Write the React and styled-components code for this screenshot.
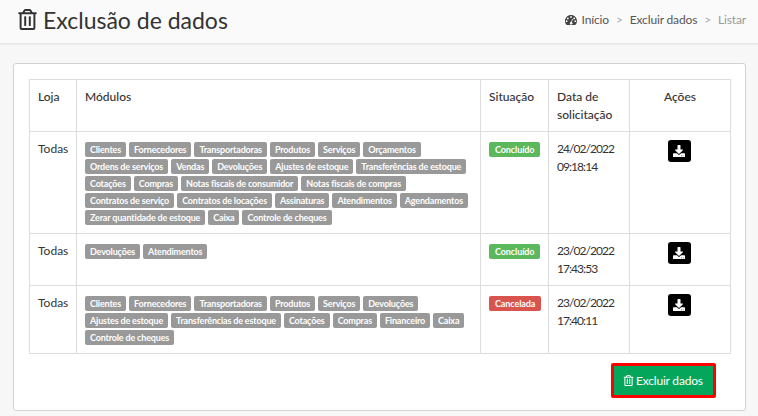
import React from 'react';
import styled, { createGlobalStyle } from 'styled-components';
import { FaRegTrashAlt, FaDownload } from 'react-icons/fa';

const GlobalStyle = createGlobalStyle`
  html, body { margin: 0; padding: 0; background: #f7f7f7; }
  body { font-family: Lato, "Open Sans", "Liberation Sans", sans-serif; color: #333; width: 758px; height: 416px; overflow: hidden; }
`;

const Header = styled.header`
  display: flex;
  align-items: center;
  justify-content: space-between;
  box-sizing: border-box;
  height: 44px;
  padding: 0 12px 4px 17px;
  background: #fafafa;
  border-bottom: 1px solid #e8e8e8;
  box-shadow: 0 1px 1px rgba(0, 0, 0, 0.03);
`;

const Title = styled.h1`
  display: flex;
  align-items: center;
  gap: 5px;
  margin: 0;
  font-size: 23px;
  font-weight: 400;
  color: #333;
  svg { font-size: 21px; }
`;

const Breadcrumb = styled.nav`
  display: flex;
  align-items: center;
  font-size: 12px;
  letter-spacing: -0.15px;
  color: #555;
`;

const Gauge = styled.svg`
  width: 12px;
  height: 10px;
  margin-right: 5px;
  fill: #444;
`;

const Sep = styled.span`
  margin: 0 7px;
  color: #aaa;
`;

const Current = styled.span`
  color: #999;
`;

const Panel = styled.section`
  box-sizing: border-box;
  margin: 19px 12px 0 13px;
  height: 348px;
  padding: 15px 15px 0;
  background: #fff;
  border: 1px solid #d2d2d2;
  border-radius: 3px;
`;

const Table = styled.table`
  width: 701px;
  table-layout: fixed;
  border-collapse: collapse;
  font-size: 12px;
  line-height: 17.5px;
`;

const Th = styled.th`
  padding: 8px;
  border: 1px solid #ddd;
  font-weight: 500;
  text-align: ${(p) => (p.$center ? 'center' : 'left')};
  vertical-align: top;
  color: #333;
`;

const Td = styled.td`
  padding: 8px;
  border: 1px solid #ddd;
  vertical-align: top;
  text-align: ${(p) => (p.$center ? 'center' : 'left')};
`;

const Tags = styled.div`
  display: flex;
  flex-wrap: wrap;
  gap: 2px 3px;
  margin-top: 2px;
`;

const Tag = styled.span`
  height: 15px;
  padding: 0 5px;
  background: #999;
  border-radius: 2px;
  color: #fff;
  font-size: 9px;
  font-weight: 700;
  letter-spacing: -0.17px;
  line-height: 15px;
  white-space: nowrap;
`;

const Status = styled.span`
  display: inline-block;
  height: 15px;
  padding: 0 6px;
  background: ${(p) => (p.$kind === 'ok' ? '#5cb85c' : '#d9534f')};
  border-radius: 2px;
  color: #fff;
  font-size: 9px;
  font-weight: 700;
  letter-spacing: -0.1px;
  line-height: 15px;
  vertical-align: top;
  margin-top: 2px;
`;

const DateText = styled.div`
  letter-spacing: -0.95px;
`;

const IconButton = styled.button`
  display: inline-flex;
  align-items: center;
  justify-content: center;
  width: 23px;
  height: 22px;
  margin-left: -2px;
  padding: 0;
  border: 0;
  border-radius: 3px;
  background: #000;
  color: #fff;
  font-size: 12px;
`;

const Footer = styled.div`
  display: flex;
  justify-content: flex-end;
  margin: 9px 14px 0 0;
`;

const DeleteButton = styled.button`
  display: inline-flex;
  align-items: center;
  gap: 2px;
  box-sizing: border-box;
  width: 105px;
  height: 35px;
  padding: 0 0 0 9px;
  border: 3px solid #f00;
  border-radius: 2px;
  background: #04a65c;
  color: #fff;
  font-family: inherit;
  font-size: 12px;
  letter-spacing: -0.2px;
  svg { font-size: 11px; }
`;

const rows = [
  {
    loja: 'Todas',
    modulos: ['Clientes', 'Fornecedores', 'Transportadoras', 'Produtos', 'Serviços', 'Orçamentos', 'Ordens de serviços', 'Vendas', 'Devoluções', 'Ajustes de estoque', 'Transferências de estoque', 'Cotações', 'Compras', 'Notas fiscais de consumidor', 'Notas fiscais de compras', 'Contratos de serviço', 'Contratos de locações', 'Assinaturas', 'Atendimentos', 'Agendamentos', 'Zerar quantidade de estoque', 'Caixa', 'Controle de cheques'],
    status: 'Concluído',
    kind: 'ok',
    data: '24/02/2022',
    hora: '09:18:14',
  },
  {
    loja: 'Todas',
    modulos: ['Devoluções', 'Atendimentos'],
    status: 'Concluído',
    kind: 'ok',
    data: '23/02/2022',
    hora: '17:43:53',
  },
  {
    loja: 'Todas',
    modulos: ['Clientes', 'Fornecedores', 'Transportadoras', 'Produtos', 'Serviços', 'Devoluções', 'Ajustes de estoque', 'Transferências de estoque', 'Cotações', 'Compras', 'Financeiro', 'Caixa', 'Controle de cheques'],
    status: 'Cancelada',
    kind: 'bad',
    data: '23/02/2022',
    hora: '17:40:11',
  },
];

export default function App() {
  return (
    <>
      <GlobalStyle />
      <Header>
        <Title><FaRegTrashAlt />Exclusão de dados</Title>
        <Breadcrumb>
          <Gauge viewBox="0 0 24 20">
            <path fillRule="evenodd" d="M12 0C5.4 0 0 5.4 0 12c0 2.9 1 5.600 2.800 7.700.3.200.6.300.9.300h16.600c.3 0 .6-.1.900-.3C23 17.600 24 14.900 24 12 24 5.400 18.600 0 12 0zM12 2.200a1.800 1.800 0 1 1 0 3.600 1.800 1.800 0 0 1 0-3.600zM5.700 5a1.800 1.800 0 1 1 0 3.600 1.800 1.800 0 0 1 0-3.600zM18.300 5a1.800 1.800 0 1 1 0 3.600 1.800 1.800 0 0 1 0-3.600zM3.400 10.500a1.800 1.800 0 1 1 0 3.600 1.800 1.800 0 0 1 0-3.600zM20.600 10.500a1.800 1.800 0 1 1 0 3.600 1.800 1.800 0 0 1 0-3.600zM14.300 7.500l1.400.4-2 6.500a2.600 2.600 0 1 1-1.500-.4z" />
          </Gauge>
          Início<Sep>&gt;</Sep>Excluir dados<Sep>&gt;</Sep><Current>Listar</Current>
        </Breadcrumb>
      </Header>
      <Panel>
        <Table>
          <colgroup>
            <col style={{ width: 47 }} />
            <col style={{ width: 404 }} />
            <col style={{ width: 68 }} />
            <col style={{ width: 81 }} />
            <col style={{ width: 101 }} />
          </colgroup>
          <thead>
            <tr>
              <Th>Loja</Th>
              <Th>Módulos</Th>
              <Th>Situação</Th>
              <Th>Data de solicitação</Th>
              <Th $center>Ações</Th>
            </tr>
          </thead>
          <tbody>
            {rows.map((r, i) => (
              <tr key={i}>
                <Td>{r.loja}</Td>
                <Td>
                  <Tags>{r.modulos.map((m) => <Tag key={m}>{m}</Tag>)}</Tags>
                </Td>
                <Td><Status $kind={r.kind}>{r.status}</Status></Td>
                <Td><DateText>{r.data}<br />{r.hora}</DateText></Td>
                <Td $center><IconButton aria-label="Baixar"><FaDownload /></IconButton></Td>
              </tr>
            ))}
          </tbody>
        </Table>
        <Footer>
          <DeleteButton><FaRegTrashAlt />Excluir dados</DeleteButton>
        </Footer>
      </Panel>
    </>
  );
}
